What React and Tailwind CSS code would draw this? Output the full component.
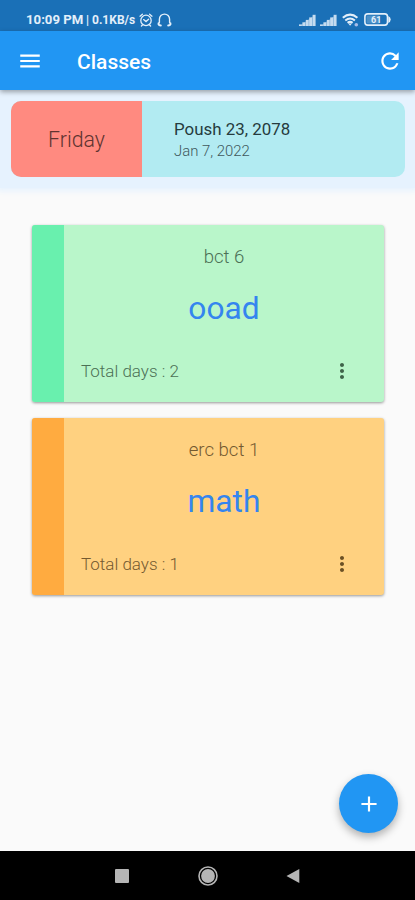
import React from 'react';
import { MdAdd, MdMenu, MdMoreVert, MdRefresh } from 'react-icons/md';

const classes = [
  {
    id: 1,
    group: 'bct 6',
    subject: 'ooad',
    days: 2,
    card: 'bg-[#b9f6ca]',
    stripe: 'bg-[#69f0ae]',
    text: 'text-[#4c7055]',
    dots: 'text-[#3f6349]',
  },
  {
    id: 2,
    group: 'erc bct 1',
    subject: 'math',
    days: 1,
    card: 'bg-[#ffd180]',
    stripe: 'bg-[#ffab40]',
    text: 'text-[#745a30]',
    dots: 'text-[#6b5024]',
  },
];

const SignalIcon = () => (
  <svg width="17" height="12" viewBox="0 0 17 12" fill="currentColor" opacity="0.85">
    <path d="M0.5 12 16.6 0.5V12z" opacity="0.5" />
    <rect x="0" y="10.4" width="2.8" height="1.6" />
    <rect x="3.4" y="8.3" width="2.8" height="3.7" />
    <rect x="6.8" y="5.9" width="2.8" height="6.1" />
    <rect x="10.2" y="3.4" width="2.8" height="8.6" />
    <rect x="13.6" y="0.8" width="2.8" height="11.2" />
  </svg>
);

const AlarmIcon = () => (
  <svg width="14" height="14" viewBox="0 0 14 14" fill="none" stroke="currentColor" strokeWidth="1.3" strokeLinecap="round">
    <circle cx="7" cy="7.4" r="5.2" />
    <path d="M1 3.2 3.4 1.2M13 3.2 10.6 1.2M4.6 6.6 7 8.6 9.6 6.2M3.4 12 2.4 13M10.6 12l1 1" />
  </svg>
);

const HeadsetIcon = () => (
  <svg width="15" height="14" viewBox="0 0 15 14" fill="none" stroke="currentColor" strokeWidth="1.4" strokeLinecap="round">
    <path d="M2.4 9.5V6.2a5.1 5.1 0 0 1 10.2 0v3.3" />
    <path d="M1.6 10.2v1.2q.4 1 2.2 1M13.4 10.2v1.2q-.4 1-2.2 1" strokeWidth="2" />
  </svg>
);

const WifiIcon = () => (
  <svg width="17" height="14" viewBox="0 0 17 14" fill="none" stroke="currentColor" strokeWidth="2">
    <path d="M0.8 4.8q7.3-6.4 14.6 0" />
    <path d="M3.3 7.5q4.8-4 9.6 0" />
    <path d="M5.6 9.9q2.5-2 5 0" />
    <path d="M6.3 10.4h3.6L8.1 12.7z" fill="currentColor" stroke="none" />
    <circle cx="14.3" cy="11.7" r="1.8" fill="#a8bde8" stroke="none" />
  </svg>
);

const BatteryIcon = () => (
  <svg width="27" height="13" viewBox="0 0 27 13" fill="none" stroke="currentColor">
    <rect x="0.9" y="0.9" width="22.6" height="11.2" rx="2.8" strokeWidth="1.6" />
    <path d="M24.3 3q2.4 1.2 2.4 3.5t-2.4 3.5z" fill="currentColor" stroke="none" />
    <rect x="2.5" y="2.6" width="13" height="7.8" rx="1" fill="currentColor" stroke="none" opacity="0.25" />
    <text x="12.2" y="9.8" textAnchor="middle" fontSize="9" fontWeight="700" fill="currentColor" stroke="none">
      61
    </text>
  </svg>
);

const StatusBar = () => (
  <div className="flex h-[31px] items-center justify-between bg-[#1a70b7] pt-2 pr-6 pl-[26px] text-[#e3effa]">
    <div className="flex items-center">
      <span className="w-[60px] text-[13.2px] leading-none font-bold whitespace-nowrap">10:09 PM</span>
      <span className="w-[49px] text-[12px] leading-none font-bold whitespace-nowrap">| 0.1KB/s</span>
      <span className="ml-[4px]"><AlarmIcon /></span>
      <span className="ml-[4px]"><HeadsetIcon /></span>
    </div>
    <div className="flex items-center">
      <SignalIcon />
      <span className="ml-[4px]"><SignalIcon /></span>
      <span className="ml-[5px]"><WifiIcon /></span>
      <span className="ml-[5px]"><BatteryIcon /></span>
    </div>
  </div>
);

const AppBar = () => (
  <header className="relative flex h-[59px] items-center bg-[#2196f3] pt-px pr-[12px] pl-[17px] text-white shadow-[0_2px_5px_rgba(0,0,0,0.35)]">
    <MdMenu size={26} />
    <h1 className="ml-[34px] pt-[3px] text-[21px] font-medium">Classes</h1>
    <MdRefresh size={26} className="ml-auto" />
  </header>
);

const DateBanner = () => (
  <div className="bg-[#e6f2fe] px-[11px] pt-[11px] pb-[11px] shadow-[0_0_6px_3px_#e6f2fe]">
    <div className="flex h-[76px] w-[394px] overflow-hidden rounded-[10px] bg-[#b2ebf2]">
      <div className="flex w-[131px] items-center justify-center bg-[#ff8a80] pt-0.5 text-[21.3px] font-light text-[#5e3330]">
        Friday
      </div>
      <div className="flex flex-col justify-center pt-0.5 pl-8">
        <p className="text-[16.9px] leading-[22px] text-[#263b3e]">Poush 23, 2078</p>
        <p className="text-[14.9px] leading-[22px] font-light text-[#40585c]">Jan 7, 2022</p>
      </div>
    </div>
  </div>
);

const ClassCard = ({ item }) => (
  <div className={`flex h-[177px] overflow-hidden rounded-[3px] shadow-[0_1px_3px_rgba(0,0,0,0.4)] ${item.card}`}>
    <div className={`w-8 ${item.stripe}`} />
    <div className="flex flex-1 flex-col pt-5">
      <p className={`text-center text-[18.6px] leading-6 font-light ${item.text}`}>{item.group}</p>
      <h2 className="mt-5 text-center text-[31.7px] leading-10 text-[#3485ef]">{item.subject}</h2>
      <div className={`mt-[30px] flex items-center justify-between pr-[30px] pl-[17px] ${item.text}`}>
        <span className="text-[17px] leading-6 font-light">Total days : {item.days}</span>
        <MdMoreVert size={24} className={item.dots} />
      </div>
    </div>
  </div>
);

const NavBar = () => (
  <nav className="flex h-[49px] items-center bg-black pl-[115px] text-[#b5b5b5]">
    <svg width="14" height="14" viewBox="0 0 14 14" fill="currentColor">
      <rect width="14" height="14" rx="1" />
    </svg>
    <svg className="ml-[69px]" width="20" height="20" viewBox="0 0 20 20" fill="none" stroke="currentColor">
      <circle cx="10" cy="10" r="9" strokeWidth="1.6" />
      <circle cx="10" cy="10" r="6.9" fill="currentColor" stroke="none" />
    </svg>
    <svg className="ml-[68px]" width="14" height="16" viewBox="0 0 14 16" fill="currentColor">
      <path d="M13.3 1v14L0.5 8z" />
    </svg>
  </nav>
);

const App = () => {
  return (
    <div className="relative flex h-[900px] w-[415px] flex-col overflow-hidden bg-[#fafafa] font-[Roboto,sans-serif]">
      <StatusBar />
      <AppBar />
      <main className="flex-1">
        <DateBanner />
        <div className="mt-[37px] flex flex-col gap-[16px] pr-[31px] pl-8">
          {classes.map((item) => (
            <ClassCard key={item.id} item={item} />
          ))}
        </div>
      </main>
      <button
        aria-label="Add class"
        className="absolute right-[17px] bottom-[67px] flex size-[59px] items-center justify-center rounded-full bg-[#2196f3] text-white shadow-[0_4px_8px_rgba(0,0,0,0.3)]"
      >
        <MdAdd size={26} />
      </button>
      <NavBar />
    </div>
  );
};

export default App;
